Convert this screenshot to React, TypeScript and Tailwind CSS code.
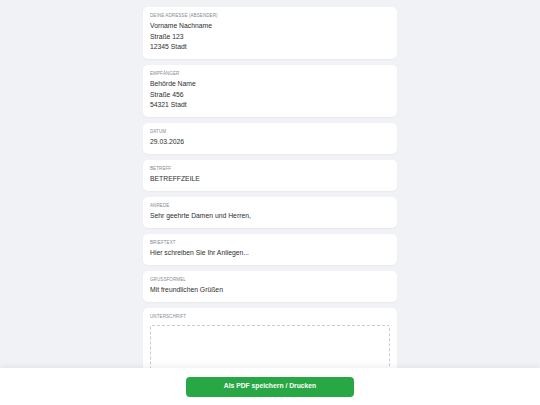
const fields: { label: string; lines: string[] }[] = [
  { label: "Deine Adresse (Absender)", lines: ["Vorname Nachname", "Straße 123", "12345 Stadt"] },
  { label: "Empfänger", lines: ["Behörde Name", "Straße 456", "54321 Stadt"] },
  { label: "Datum", lines: ["29.03.2026"] },
  { label: "Betreff", lines: ["BETREFFZEILE"] },
  { label: "Anrede", lines: ["Sehr geehrte Damen und Herren,"] },
  { label: "Brieftext", lines: ["Hier schreiben Sie Ihr Anliegen..."] },
  { label: "Grussformel", lines: ["Mit freundlichen Grüßen"] },
];

function Label({ children }: { children: string }) {
  return (
    <div className="mb-[2px] text-[4.5px] uppercase leading-[6px] tracking-[0.1px] text-[#858a92]">
      {children}
    </div>
  );
}

export default function App() {
  return (
    <div
      className="min-h-screen bg-[#f0f2f5] pb-[60px]"
      style={{ fontFamily: '"Liberation Sans", Arial, sans-serif' }}
    >
      <div className="mx-auto flex w-[254px] flex-col gap-[6px] pt-[7px]">
        {fields.map((f) => (
          <div
            key={f.label}
            className="rounded-[5px] bg-white px-[7px] pb-[6.5px] pt-[6px] shadow-[0_1px_2px_rgba(0,0,0,0.04)]"
          >
            <Label>{f.label}</Label>
            {f.lines.map((l) => (
              <div key={l} className="text-[6.8px] leading-[10.5px] text-[#2e2e2e]">
                {l}
              </div>
            ))}
          </div>
        ))}

        {/* signature area */}
        <div className="rounded-[5px] bg-white px-[7px] pb-[7px] pt-[6px] shadow-[0_1px_2px_rgba(0,0,0,0.04)]">
          <Label>Unterschrift</Label>
          <div className="mt-[5px] h-[70px] rounded-[2px] border border-dashed border-[#c8ccd2]" />
        </div>
      </div>

      {/* sticky action bar */}
      <div className="fixed inset-x-0 bottom-0 flex h-[37px] items-center justify-center bg-white shadow-[0_-2px_6px_rgba(0,0,0,0.06)]">
        <button className="h-[20px] w-[168px] rounded-[4px] bg-[#28a745] text-[6.75px] font-bold text-white">
          Als PDF speichern / Drucken
        </button>
      </div>
    </div>
  );
}
